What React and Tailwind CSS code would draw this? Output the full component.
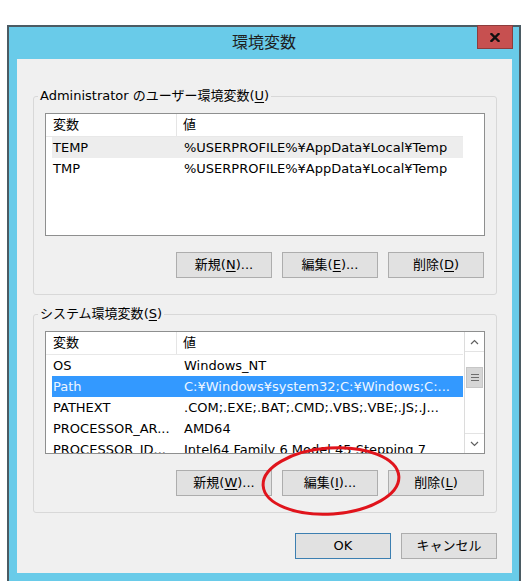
import React from "react";

const userVars = [
  { name: "TEMP", value: "%USERPROFILE%¥AppData¥Local¥Temp", state: "inactive" },
  { name: "TMP", value: "%USERPROFILE%¥AppData¥Local¥Temp" },
];

const systemVars = [
  { name: "OS", value: "Windows_NT" },
  { name: "Path", value: "C:¥Windows¥system32;C:¥Windows;C:...", state: "selected" },
  { name: "PATHEXT", value: ".COM;.EXE;.BAT;.CMD;.VBS;.VBE;.JS;.J..." },
  { name: "PROCESSOR_AR...", value: "AMD64" },
  { name: "PROCESSOR_ID...", value: "Intel64 Family 6 Model 45 Stepping 7" },
];

function Mnemonic({ label, keyChar, suffix = "" }) {
  return (
    <span>
      {label}(<span className="underline underline-offset-2">{keyChar}</span>){suffix}
    </span>
  );
}

function WinButton({ children, isDefault = false }) {
  return (
    <button
      className={
        isDefault
          ? "w-[96px] h-[26px] bg-[#e1e1e1] border border-[#3c7fb1] flex items-center justify-center"
          : "w-[96px] h-[26px] bg-[#e1e1e1] border border-[#adadad] flex items-center justify-center"
      }
    >
      {children}
    </button>
  );
}

function Chevron({ up }) {
  return (
    <svg width="9" height="6" viewBox="0 0 9 6">
      <polyline
        points={up ? "1,5 4.5,1.5 8,5" : "1,1 4.5,4.5 8,1"}
        fill="none"
        stroke="#606060"
        strokeWidth="1.2"
      />
    </svg>
  );
}

function ScrollBar() {
  return (
    <div className="w-[20px] flex flex-col border-l border-[#dcdcdc] bg-white">
      <div className="h-[20px] border-b border-[#e3e3e3] flex items-center justify-center">
        <Chevron up />
      </div>
      <div className="h-[15px]" />
      <div className="h-[21px] mx-[1px] bg-[#d6d6d6] border border-[#c6c6c6] flex flex-col items-center justify-center gap-[2px]">
        <div className="w-[8px] h-[1px] bg-[#6d6d6d]" />
        <div className="w-[8px] h-[1px] bg-[#6d6d6d]" />
        <div className="w-[8px] h-[1px] bg-[#6d6d6d]" />
      </div>
      <div className="flex-1" />
      <div className="h-[20px] border-t border-[#e3e3e3] flex items-center justify-center">
        <Chevron />
      </div>
    </div>
  );
}

function VarList({ rows, scroll = false }) {
  return (
    <div className="mx-[11px] mt-[8px] h-[123px] border border-[#8e8f8f] bg-white flex overflow-hidden">
      <div className="w-[417px] flex flex-col">
        <div className="h-[23px] flex border-b border-[#e8e8e8] shrink-0">
          <div className="w-[131px] pl-[7px] flex items-center border-r border-[#e5e5e5]">変数</div>
          <div className="flex-1 pl-[6px] flex items-center">値</div>
        </div>
        {rows.map((row) => (
          <div
            key={row.name}
            className={
              row.state === "selected"
                ? "ml-[6px] h-[21px] shrink-0 flex items-center bg-[#3399ff] text-[#eef6ff]"
                : row.state === "inactive"
                ? "ml-[6px] h-[21px] shrink-0 flex items-center bg-[#ededed]"
                : "ml-[6px] h-[21px] shrink-0 flex items-center"
            }
          >
            <div className="w-[126px] pl-[1px] whitespace-nowrap overflow-hidden">{row.name}</div>
            <div className="flex-1 pl-[6px] whitespace-nowrap overflow-hidden">{row.value}</div>
          </div>
        ))}
      </div>
      <div className="flex-1" />
      {scroll && <ScrollBar />}
    </div>
  );
}

function GroupBox({ title, rows, scroll, buttons, className = "" }) {
  return (
    <fieldset className={"border border-[#d8d8d8] rounded-[3px] " + className}>
      <legend className="ml-[4px] px-[2px] leading-[18px]">{title}</legend>
      <VarList rows={rows} scroll={scroll} />
      <div className="mt-[16px] mb-[16px] mr-[12px] flex justify-end gap-[10px]">{buttons}</div>
    </fieldset>
  );
}

export default function App() {
  return (
    <div className="relative w-[529px] h-[581px] overflow-hidden bg-white pt-[25px] pl-[7px] font-['DejaVu_Sans','Noto_Sans_CJK_JP',sans-serif] text-[13px] text-black">
      <div className="w-[514px] h-[564px] border-2 border-[#4b5b63] bg-[#69cbe9] flex flex-col">
        {/* title bar */}
        <div className="relative h-[32px] shrink-0 flex items-center justify-center text-[16px] text-[#1e1e1e]">
          環境変数
          <div className="absolute -top-[2px] right-[6px] w-[36px] h-[24px] bg-[#c75050] border border-[#8d3c3c] flex items-center justify-center">
            <svg width="10" height="9" viewBox="0 0 10 9">
              <path d="M1.5 1 L8.5 8 M8.5 1 L1.5 8" stroke="#111" strokeWidth="2.4" strokeLinecap="square" />
            </svg>
          </div>
        </div>

        {/* client area */}
        <div className="ml-[8px] w-[495px] h-[514px] bg-[#f0f0f0] pt-[28px] pl-[16px] pr-[15px]">
          <GroupBox
            title={<Mnemonic label="Administrator のユーザー環境変数" keyChar="U" />}
            rows={userVars}
            buttons={
              <>
                <WinButton><Mnemonic label="新規" keyChar="N" suffix="..." /></WinButton>
                <WinButton><Mnemonic label="編集" keyChar="E" suffix="..." /></WinButton>
                <WinButton><Mnemonic label="削除" keyChar="D" /></WinButton>
              </>
            }
          />
          <GroupBox
            className="mt-[10px]"
            title={<Mnemonic label="システム環境変数" keyChar="S" />}
            rows={systemVars}
            scroll
            buttons={
              <>
                <WinButton><Mnemonic label="新規" keyChar="W" suffix="..." /></WinButton>
                <WinButton><Mnemonic label="編集" keyChar="I" suffix="..." /></WinButton>
                <WinButton><Mnemonic label="削除" keyChar="L" /></WinButton>
              </>
            }
          />
          <div className="mt-[20px] flex justify-end gap-[10px]">
            <WinButton isDefault>OK</WinButton>
            <WinButton>キャンセル</WinButton>
          </div>
        </div>
      </div>

      {/* red marker around the edit button */}
      <svg className="absolute inset-0 pointer-events-none" width="529" height="581">
        <ellipse
          cx="331"
          cy="481"
          rx="68"
          ry="33"
          transform="rotate(-4 331 481)"
          fill="none"
          stroke="#e0141c"
          strokeWidth="3"
        />
      </svg>
    </div>
  );
}
